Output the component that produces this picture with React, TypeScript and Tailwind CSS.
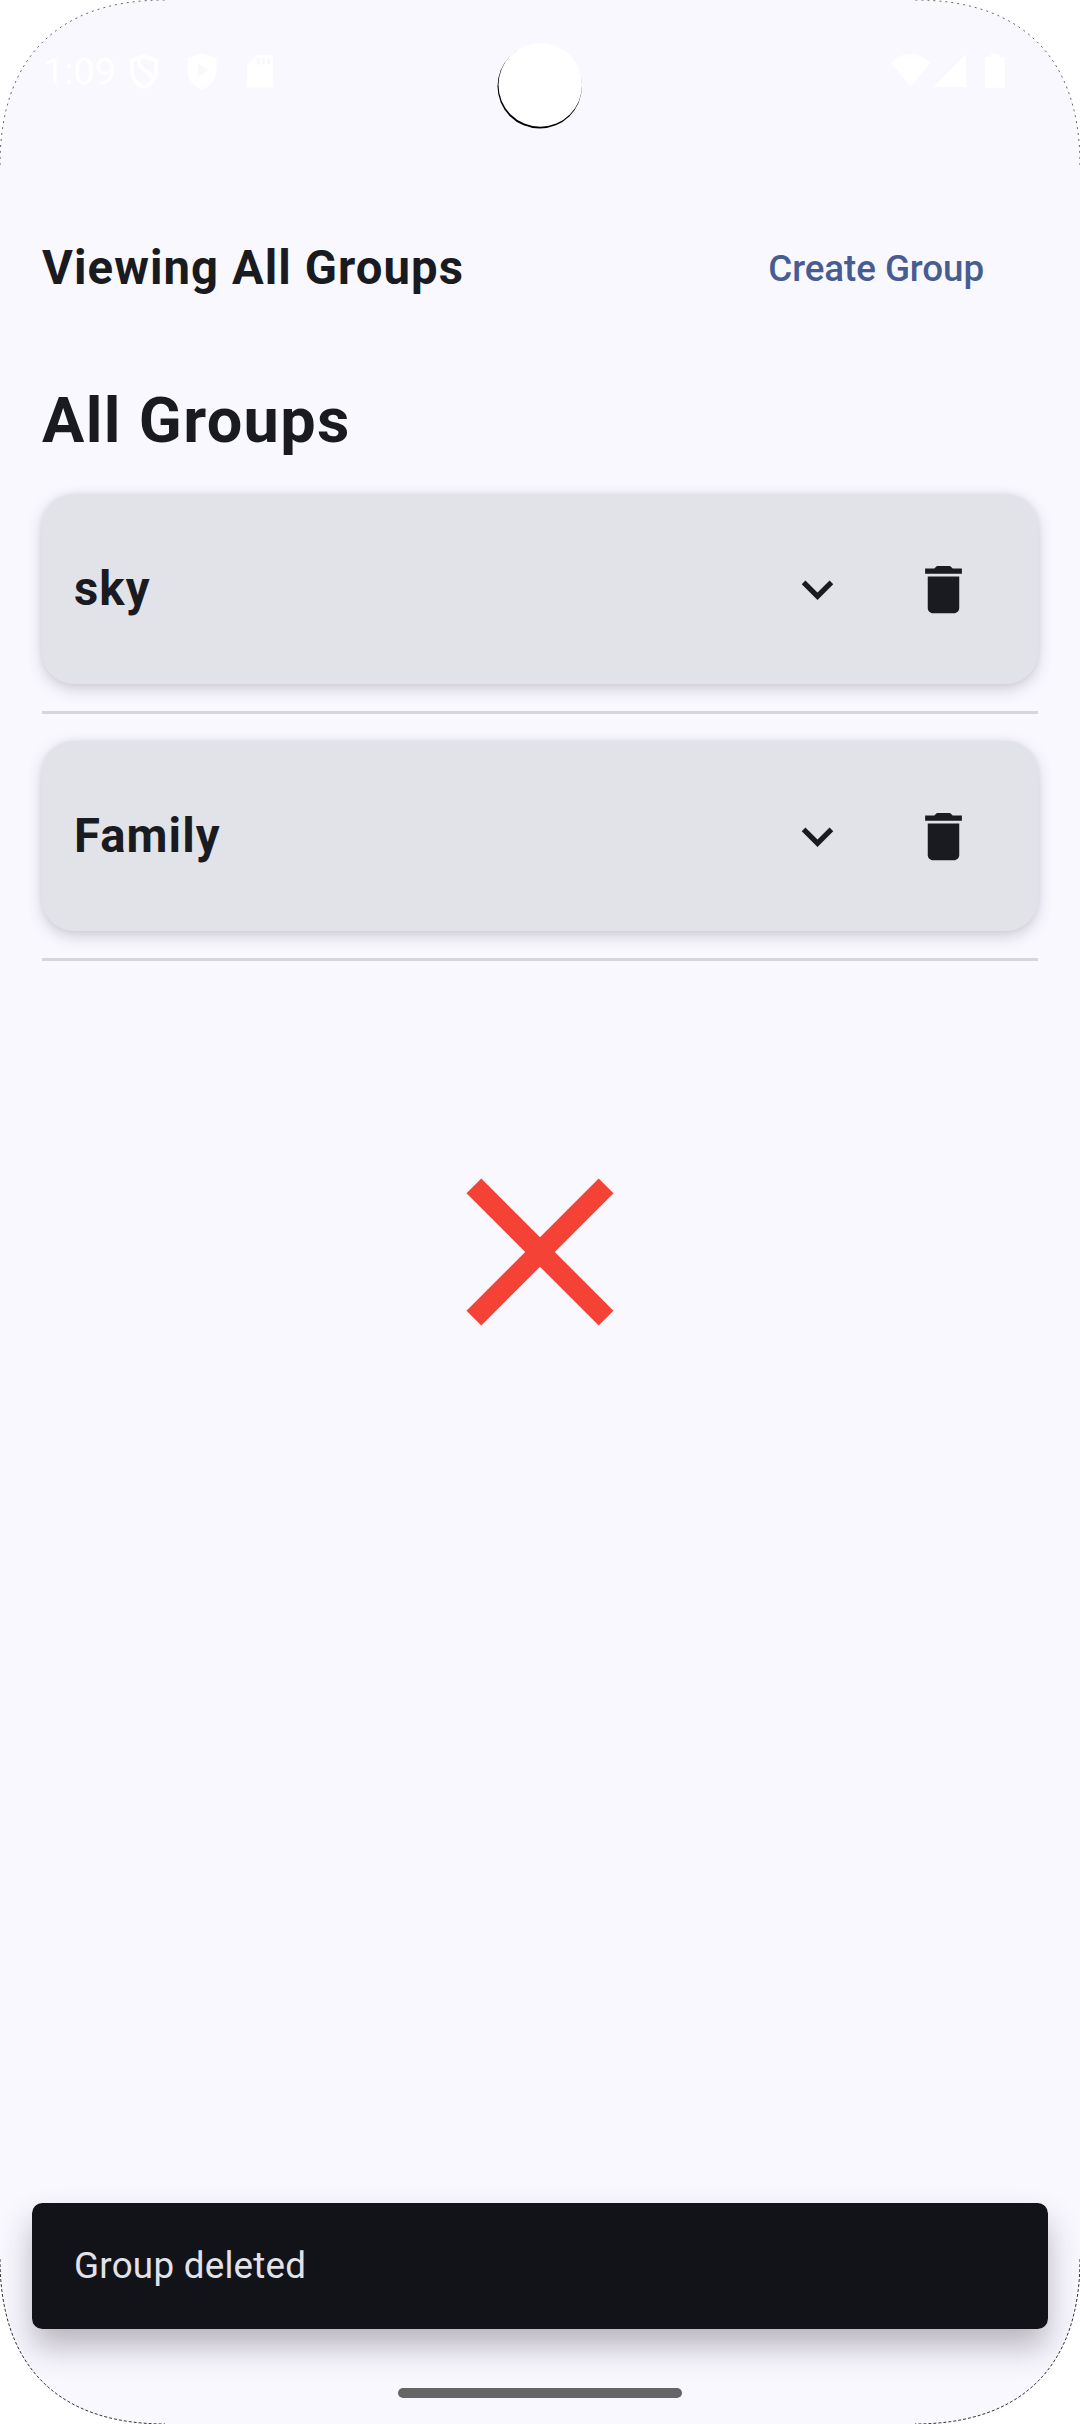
const CORNER_EDGE = "M0 165C0 58 58 0 165 0";

function ScreenCorner({ className, line }: { className: string; line: string }) {
  return (
    <svg className={className} width="166" height="166" viewBox="0 0 166 166" fill="none">
      <path d={`${CORNER_EDGE}H0Z`} fill="#fff" />
      <path d={CORNER_EDGE} className={line} stroke="#000" />
    </svg>
  );
}

function StatusBar() {
  return (
    <header className="flex h-[142px] items-start justify-between pl-[43px] pr-[75px] pt-[53px] text-white">
      <div className="flex items-start">
        <span className="w-[86px] text-[37.8px] leading-[36px]">1:09</span>
        <svg className="mt-px" width="30" height="36" viewBox="0 0 30 36" fill="none" stroke="#fff" strokeWidth="3.6">
          <path d="M15 2.200 27.200 6.600V16c0 8.600-5 14.800-12.200 17.400C7.800 30.800 2.800 24.600 2.800 16V6.600Z" />
          <path d="M9.500 4.500c-1 13 13 10 13.500 21" />
        </svg>
        <svg className="ml-[28px]" width="30" height="37" viewBox="0 0 30 37">
          <path fill="#fff" fillRule="evenodd" d="M15 0 29.500 5.500V17c0 9.500-6 16.500-14.500 19.500C6.500 33.500.500 26.500.500 17V5.500ZM11 11v12.500l10.500-6.250Z" />
        </svg>
        <svg className="ml-[30px] mt-[2px]" width="26" height="33" viewBox="0 0 26 33">
          <path fill="#fff" fillRule="evenodd" d="M10 0h13a3 3 0 0 1 3 3v26.500a3 3 0 0 1-3 3H3a3 3 0 0 1-3-3V9.500ZM9.700 3v6.500h3.300V3ZM14.700 3v6.500H18V3ZM19.700 3v6.500H23V3Z" />
        </svg>
      </div>
      <div className="flex items-start">
        <svg className="mt-px" width="39" height="33" viewBox="0 0 39 33">
          <path fill="#fff" d="M0 9C11-3 28-3 39 9L19.500 33Z" />
        </svg>
        <svg className="ml-[3px] mt-px" width="33" height="33" viewBox="0 0 33 33">
          <path fill="#fff" d="M33 0v33H0Z" />
        </svg>
        <svg className="ml-[19px] mt-px" width="20" height="34" viewBox="0 0 20 34">
          <path fill="#fff" d="M6 0h8v3h4a2 2 0 0 1 2 2v27a2 2 0 0 1-2 2H2a2 2 0 0 1-2-2V5a2 2 0 0 1 2-2h4Z" />
        </svg>
      </div>
    </header>
  );
}

function GroupCard({ name }: { name: string }) {
  return (
    <li>
      <div className="flex h-[190px] items-center rounded-[32px] bg-[#e2e3e8] pl-[32px] pr-[31.5px] shadow-[0_5px_16px_rgba(40,25,45,0.2),0_0_6px_rgba(40,25,45,0.06)]">
        <span className="flex-1 text-[47.25px] font-bold leading-[63px] tracking-[1.08px]">{name}</span>
        <button className="flex size-[126px] items-center justify-center" aria-label={`Expand ${name}`}>
          <svg width="63" height="63" viewBox="0 0 24 24" fill="currentColor">
            <path d="M7.410 8.590 12 13.170l4.590-4.580L18 10l-6 6-6-6z" />
          </svg>
        </button>
        <button className="flex size-[126px] items-center justify-center" aria-label={`Delete ${name}`}>
          <svg width="63" height="63" viewBox="0 0 24 24" fill="currentColor">
            <path d="M6 19c0 1.100.9 2 2 2h8c1.100 0 2-.9 2-2V7H6v12zM19 4h-3.500l-1-1h-5l-1 1H5v2h14V4z" />
          </svg>
        </button>
      </div>
      <hr className="mb-[27px] mt-[27px] h-[3px] border-0 bg-[#d6d5da]" />
    </li>
  );
}

export default function App() {
  return (
    <div className="relative flex h-[2424px] w-[1080px] flex-col overflow-hidden bg-[#f9f8ff] font-['Roboto',sans-serif] text-[#1a1b20]">
      <StatusBar />
      <main className="flex flex-1 flex-col px-[42px]">
        <div className="mt-[63px] flex h-[126px] items-center justify-between pr-[54px]">
          <h1 className="text-[47.25px] font-bold leading-[63px] tracking-[1.08px]">Viewing All Groups</h1>
          <button className="pt-[2px] text-[36.75px] font-medium leading-[52px] tracking-[-0.08px] text-[#475d92]">Create Group</button>
        </div>
        <h2 className="mt-[58px] text-[63px] font-bold leading-[63px] tracking-[1.38px]">All Groups</h2>
        <ul className="mt-[42px]">
          <GroupCard name="sky" />
          <GroupCard name="Family" />
        </ul>
        <div className="mt-[138px] flex justify-center">
          <svg width="252" height="252" viewBox="0 0 24 24" fill="#f44336">
            <path d="M19 6.410 17.590 5 12 10.590 6.410 5 5 6.410 10.590 12 5 17.590 6.410 19 12 13.410 17.590 19 19 17.590 13.410 12z" />
          </svg>
        </div>
      </main>
      <div role="status" className="mx-[32px] flex h-[126px] shrink-0 items-center rounded-[10.5px] bg-[#121318] px-[42px] text-[36.75px] leading-[52px] tracking-[0.26px] text-[#e2e2e9] shadow-[0_18px_32px_rgba(40,25,35,0.3)]">
        Group deleted
      </div>
      <footer className="flex h-[95px] shrink-0 justify-center pt-[59px]">
        <div className="h-[10px] w-[284px] rounded-full bg-[#666668]" />
      </footer>
      <svg className="absolute left-[496px] top-[42px]" width="88" height="88" viewBox="0 0 88 88">
        <circle cx="43.700" cy="44.300" r="42.200" fill="#000" />
        <circle cx="44.300" cy="42.900" r="41.800" fill="#fff" />
      </svg>
      <ScreenCorner className="absolute left-0 top-0" line="[stroke-dasharray:2px_4px] [stroke-width:0.6px]" />
      <ScreenCorner className="absolute right-0 top-0 -scale-x-100" line="[stroke-dasharray:2px_4px] [stroke-width:0.6px]" />
      <ScreenCorner className="absolute bottom-0 left-0 -scale-y-100" line="[stroke-dasharray:3px_2px] [stroke-width:0.8px]" />
      <ScreenCorner className="absolute bottom-0 right-0 -scale-100" line="[stroke-dasharray:3px_2px] [stroke-width:0.8px]" />
    </div>
  );
}
